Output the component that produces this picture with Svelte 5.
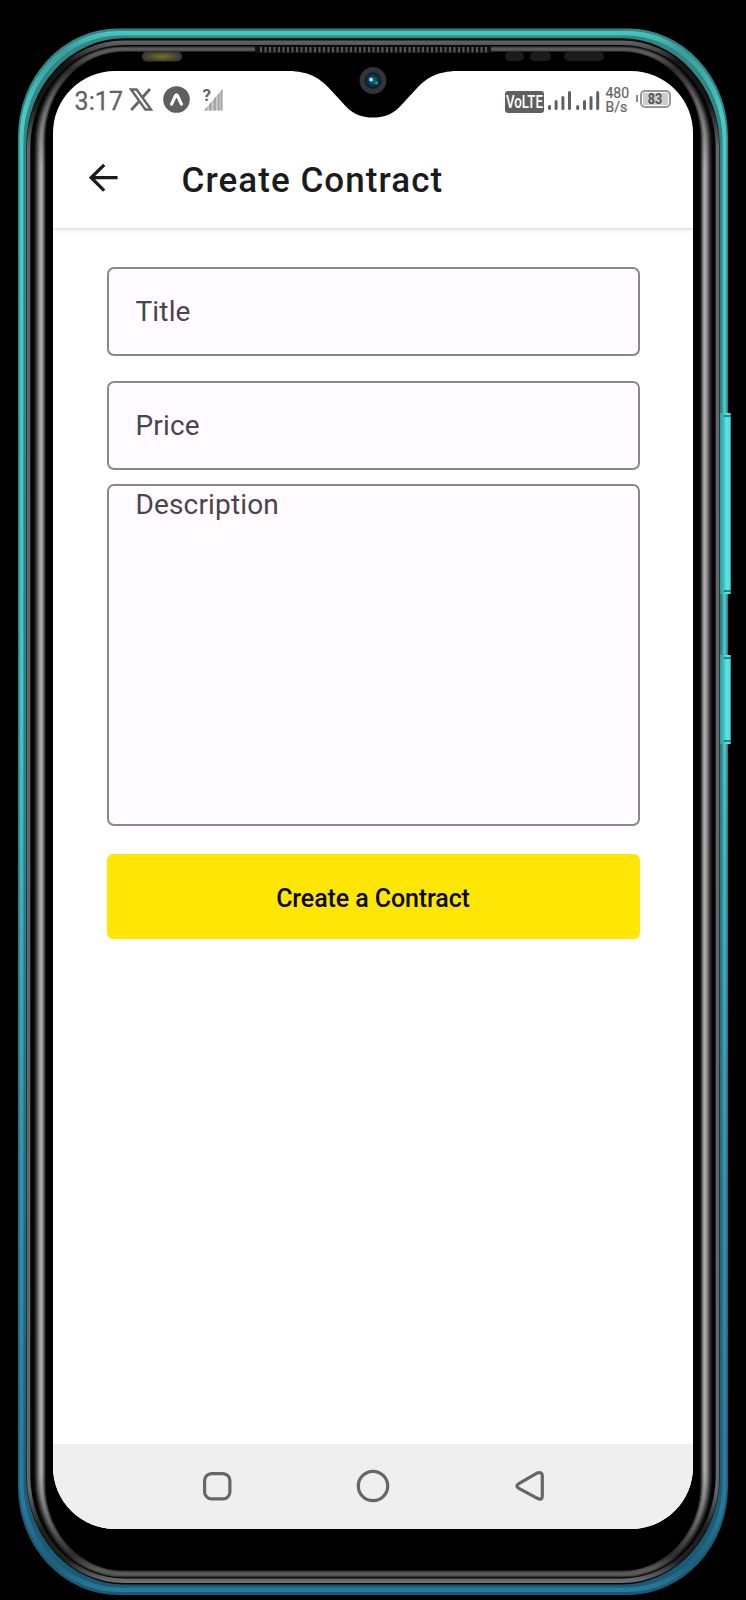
<script>
  const grey = (v) => `rgb(${Math.round(v)},${Math.round(v)},${Math.round(v)})`;
  const band = Array.from({ length: 9 }, (_, i) => {
    const side = [24, 58, 92, 128, 162, 172, 150, 90, 30][i];
    const edge = [30, 60, 80, 88, 92, 90, 84, 76, 50][i];
    return {
      id: 'band' + i,
      x: 34.2 + i * 1.3,
      y: 46.2 + i * 0.6,
      b: 1577.5 - i * 0.75,
      r: 88 - i * 1.1,
      side: grey(side),
      edge: grey(edge),
      dim: grey(edge * 0.5),
      mid: grey(side * 0.6)
    };
  });
  const slots = Array.from({ length: 51 }, (_, i) => 260 + i * 4.5);
</script>

<div class="phone">
  <svg class="frame" viewBox="0 0 746 1600" aria-hidden="true">
    <defs>
      <linearGradient id="rim" x1="0" y1="28" x2="0" y2="1596" gradientUnits="userSpaceOnUse">
        <stop offset="0" stop-color="#348583" /><stop offset=".5" stop-color="#2b8188" /><stop offset="1" stop-color="#1b5874" />
      </linearGradient>
      <linearGradient id="shine" x1="0" y1="28" x2="0" y2="1596" gradientUnits="userSpaceOnUse">
        <stop offset="0" stop-color="#48ceca" /><stop offset=".015" stop-color="#399d9b" /><stop offset=".055" stop-color="#46cbc8" />
        <stop offset=".45" stop-color="#45c0c5" /><stop offset=".75" stop-color="#348eaa" /><stop offset=".94" stop-color="#277a9b" /><stop offset=".98" stop-color="#1d607c" /><stop offset="1" stop-color="#2880a3" />
      </linearGradient>
      <linearGradient id="seam" x1="0" y1="40" x2="0" y2="1584" gradientUnits="userSpaceOnUse">
        <stop offset="0" stop-color="#666" /><stop offset=".006" stop-color="#484848" /><stop offset=".014" stop-color="#161616" /><stop offset=".04" stop-color="#161616" /><stop offset=".07" stop-color="#666" />
        <stop offset=".94" stop-color="#666" /><stop offset=".965" stop-color="#1d1d1d" /><stop offset=".985" stop-color="#222" /><stop offset="1" stop-color="#777" />
      </linearGradient>
      {#each band as s}
        <linearGradient id={s.id} x1="0" y1="46" x2="0" y2="1578" gradientUnits="userSpaceOnUse">
          <stop offset="0" stop-color={s.edge} /><stop offset=".006" stop-color={s.edge} /><stop offset=".015" stop-color={s.dim} /><stop offset=".035" stop-color={s.mid} /><stop offset=".08" stop-color={s.side} />
          <stop offset=".93" stop-color={s.side} /><stop offset=".965" stop-color={s.mid} /><stop offset=".985" stop-color={s.dim} /><stop offset=".994" stop-color={s.edge} /><stop offset="1" stop-color={s.edge} />
        </linearGradient>
      {/each}
      <linearGradient id="key" x1="0" x2="1"><stop offset="0" stop-color="#2f9c9c" /><stop offset=".35" stop-color="#3cc0c0" /><stop offset=".6" stop-color="#5ae5e4" /><stop offset="1" stop-color="#4ddbd9" /></linearGradient>
      <radialGradient id="led"><stop offset="0" stop-color="#77741c" /><stop offset="1" stop-color="#393935" /></radialGradient>
    </defs>

    <rect x="18" y="28.5" width="710" height="1566.5" rx="100" ry="108" fill="url(#rim)" />
    <rect x="19.6" y="31" width="706.8" height="1561" rx="99" ry="107" fill="url(#shine)" />
    <rect x="23.4" y="35.6" width="699.2" height="1552" rx="97" ry="105" fill="url(#rim)" />
    <rect x="26.4" y="38.3" width="693.2" height="1546.2" rx="98" ry="107" fill="#050505" />
    <rect x="26.9" y="40.5" width="692.2" height="1542.6" rx="97" ry="105" fill="url(#seam)" />
    <rect x="30.3" y="45" width="685.4" height="1533.6" rx="94" ry="103" fill="#050505" />
    {#each band as s}
      <rect x={s.x} y={s.y} width={746 - 2 * s.x} height={s.b - s.y} rx={s.r} ry={s.r + 10} fill="url(#{s.id})" />
    {/each}
    <rect x="45.8" y="51.8" width="654.4" height="1518.8" rx="77" ry="86" fill="#000" />

    <rect x="720" y="413" width="10.7" height="181" fill="url(#key)" />
    <rect x="720" y="655" width="10.7" height="89" fill="url(#key)" />
    <path d="M724 416h7M724 591h7M724 658h7M724 741h7" stroke="#17686d" stroke-width="1.3" />

    <rect x="255" y="46" width="236" height="7" fill="#111" />
    {#each slots as x}
      <rect {x} y="47" width="2" height="5.4" fill="#595959" />
    {/each}
    <rect x="142" y="51.5" width="40" height="10" rx="5" fill="url(#led)" />
    <rect x="505" y="52" width="19" height="9" rx="4.5" fill="#1b1b1b" />
    <rect x="530" y="52" width="21" height="9" rx="4.5" fill="#1b1b1b" />
    <rect x="564" y="52" width="40" height="9" rx="4.5" fill="#1b1b1b" />
  </svg>

  <main class="screen">
    <div class="status">
      <span class="clock">3:17</span>
      <svg class="xlogo" width="24" height="23" viewBox="0 0 24 23"><path d="M2 1.5h5.6L22 21.5h-5.6z" fill="none" stroke="#666" stroke-width="2.4" /><path d="M21 1L13.2 9.8M10.5 13L2.2 22" stroke="#666" stroke-width="2.8" /></svg>
      <svg class="expo" width="27" height="27" viewBox="0 0 27 27"><circle cx="13.5" cy="13.5" r="13.3" fill="#5f5f5f" /><path d="M8.6 18.2L12.4 9.9Q13.5 8 14.6 9.9L18.400 18.200" fill="none" stroke="#fff" stroke-width="3.2" stroke-linecap="round" stroke-linejoin="round" /></svg>
      <span class="nosim">
        <svg width="21" height="24" viewBox="0 0 21 24"><path d="M1 23.5L19.5 2v21.5z" fill="#d2d2d2" /><path d="M1 23.5l3.4-4v4zM6 17.7l2.7-3.2v9H6zM10.4 12.6l2.7-3.2v14.1h-2.7zM14.6 7.7l2-2.3v18.1h-2zM17.7 4.1L19.5 2v21.5h-1.8z" fill="#a6a6a6" /></svg>
        <b>?</b>
      </span>
      <span class="volte"><i>VoLTE</i></span>
      <svg class="bars" width="53" height="20" viewBox="0 0 53 20"><path d="M2.5 18.4v-2M9.1 18.4v-7M15.9 18.4v-11M22.5 18.4V2.5M30.7 18.4v-2M37.5 18.4v-7M44 18.4v-11M50.7 18.4V2.5" stroke="#606060" stroke-width="3" stroke-linecap="round" /></svg>
      <span class="speed">480<br />B/s</span>
      <span class="nub"></span>
      <span class="battery"><i>83</i></span>
    </div>

    <header>
      <svg width="30" height="30" viewBox="0 0 30 30"><path d="M15.2 1.8L2.2 14.7l13 13M2.4 14.7H28.6" fill="none" stroke="#1b1b1b" stroke-width="3.3" /></svg>
      <h1>Create Contract</h1>
    </header>

    <form>
      <div class="field">Title</div>
      <div class="field price">Price</div>
      <div class="field area">Description</div>
      <button type="button">Create a Contract</button>
    </form>

    <nav>
      <svg width="34" height="34" viewBox="0 0 34 34"><rect x="4.6" y="4.6" width="25.3" height="25.3" rx="7" /></svg>
      <svg width="34" height="34" viewBox="0 0 34 34"><circle cx="17" cy="17" r="14.7" /></svg>
      <svg width="34" height="34" viewBox="0 0 34 34"><path d="M5.9 14.7L24 4.1Q29.3 2.2 29.3 7v20Q29.3 31.8 24.4 29.3L5.9 19.3Q1.9 17 5.9 14.7z" /></svg>
    </nav>
  </main>

  <svg class="notch" width="176" height="52" viewBox="285 66 176 52" aria-hidden="true">
    <defs>
      <radialGradient id="lens"><stop offset="0" stop-color="#1b7386" /><stop offset=".6" stop-color="#0b3747" /><stop offset="1" stop-color="#061a24" /></radialGradient>
    </defs>
    <path d="M285 70.8C306 71 317 76 328 87L346 106.5C354 115 363 117.6 373 117.6S392 115 400 106.5L418 87C429 76 440 71 461 70.8V70H285z" fill="#000" />
    <circle cx="373" cy="80.5" r="13.4" fill="#343438" />
    <circle cx="373" cy="80.5" r="8.3" fill="url(#lens)" />
    <circle cx="371" cy="79.5" r="1.9" fill="#a6e8f2" />
    <circle cx="376.5" cy="83" r="1.6" fill="#269987" />
  </svg>
</div>

<style>
  :global(body) { background: #000; }
  .phone {
    position: relative;
    box-sizing: border-box;
    width: 746px;
    height: 1600px;
    padding: 71px 53px;
    background: #000;
    overflow: hidden;
    font-family: Roboto, "Liberation Sans", sans-serif;
  }
  .frame { position: absolute; inset: 0; width: 746px; height: 1600px; }
  .notch { position: absolute; left: 285px; top: 66px; }
  .screen {
    position: relative;
    display: flex;
    flex-direction: column;
    height: 1458px;
    border-radius: 62px;
    background: #fff;
    overflow: hidden;
  }
  .status {
    display: flex;
    align-items: center;
    height: 58px;
    padding: 0 22px 0 21.5px;
    color: #636363;
    flex: none;
  }
  .clock { font-size: 25px; letter-spacing: .1px; width: 54px; white-space: nowrap; margin-top: 2px; -webkit-text-stroke: .3px #636363; }
  .xlogo { margin-top: -2px; }
  .expo { margin: -2px 0 0 10px; }
  .nosim { position: relative; width: 21px; height: 24px; margin: -2px 0 0 13px; }
  .nosim svg { display: block; }
  .nosim b { position: absolute; left: 0; top: -1px; font-size: 17px; line-height: 18px; font-weight: 700; }
  .volte {
    display: flex;
    align-items: center;
    justify-content: center;
    width: 39px;
    height: 22px;
    margin-left: auto;
    border-radius: 3px;
    background: #5f5f5f;
    color: #fff;
    margin-top: 3px;
  }
  .volte i { font: 500 19px Roboto, sans-serif; transform: scaleX(.7); }
  .bars { margin-left: 3px; }
  .speed { margin-left: 6px; width: 24px; font-size: 14px; line-height: 14.5px; white-space: nowrap; -webkit-text-stroke: .2px #636363; }
  .nub { width: 2.5px; height: 7px; margin: -3px 2px 0 6px; background: #888; }
  .battery {
    display: flex;
    align-items: center;
    justify-content: center;
    box-sizing: border-box;
    width: 31px;
    height: 18px;
    border: 2px solid #969696;
    border-radius: 5px;
    background: linear-gradient(#ccc, #ccc) center / 25px 12px no-repeat;
    margin-top: -2px;
  }
  .battery i { font: 700 14px Roboto, sans-serif; color: #555; transform: scaleX(.9); }
  header {
    display: flex;
    align-items: center;
    height: 99px;
    padding-left: 35.5px;
    flex: none;
    box-shadow: 0 1px 3px rgba(0, 0, 0, .13), 0 3px 7px rgba(0, 0, 0, .05);
    clip-path: inset(0 0 -12px 0);
  }
  header svg { margin-top: -2px; }
  h1 { margin: 4px 0 0 63px; font-size: 35px; line-height: 44px; font-weight: 500; letter-spacing: 1.05px; color: #1b1b1b; white-space: nowrap; }
  form { display: flex; flex-direction: column; padding: 38.5px 53.5px 0; flex: 1; }
  .field {
    box-sizing: border-box;
    display: flex;
    align-items: center;
    height: 89px;
    padding: 1px 27px 0;
    border: 2px solid #8b888d;
    border-radius: 7px;
    background: #fffbfe;
    color: #49454f;
    font-size: 28px;
    letter-spacing: .15px;
  }
  .price { margin-top: 25px; }
  .area { height: 342px; margin-top: 14px; align-items: flex-start; padding-top: 2px; }
  button {
    height: 85px;
    margin-top: 28.5px;
    border: 0;
    border-radius: 6px;
    background: #ffe605;
    color: #0b0b0b;
    font: 500 25px Roboto, sans-serif;
    letter-spacing: -.1px;
    padding: 3px 0 0;
  }
  nav { box-sizing: border-box; display: flex; align-items: center; justify-content: center; gap: 122.5px; height: 85px; padding-bottom: 1px; background: #efefef; flex: none; }
  nav svg { fill: none; stroke: #666; stroke-width: 3.2; stroke-linejoin: round; }
</style>
